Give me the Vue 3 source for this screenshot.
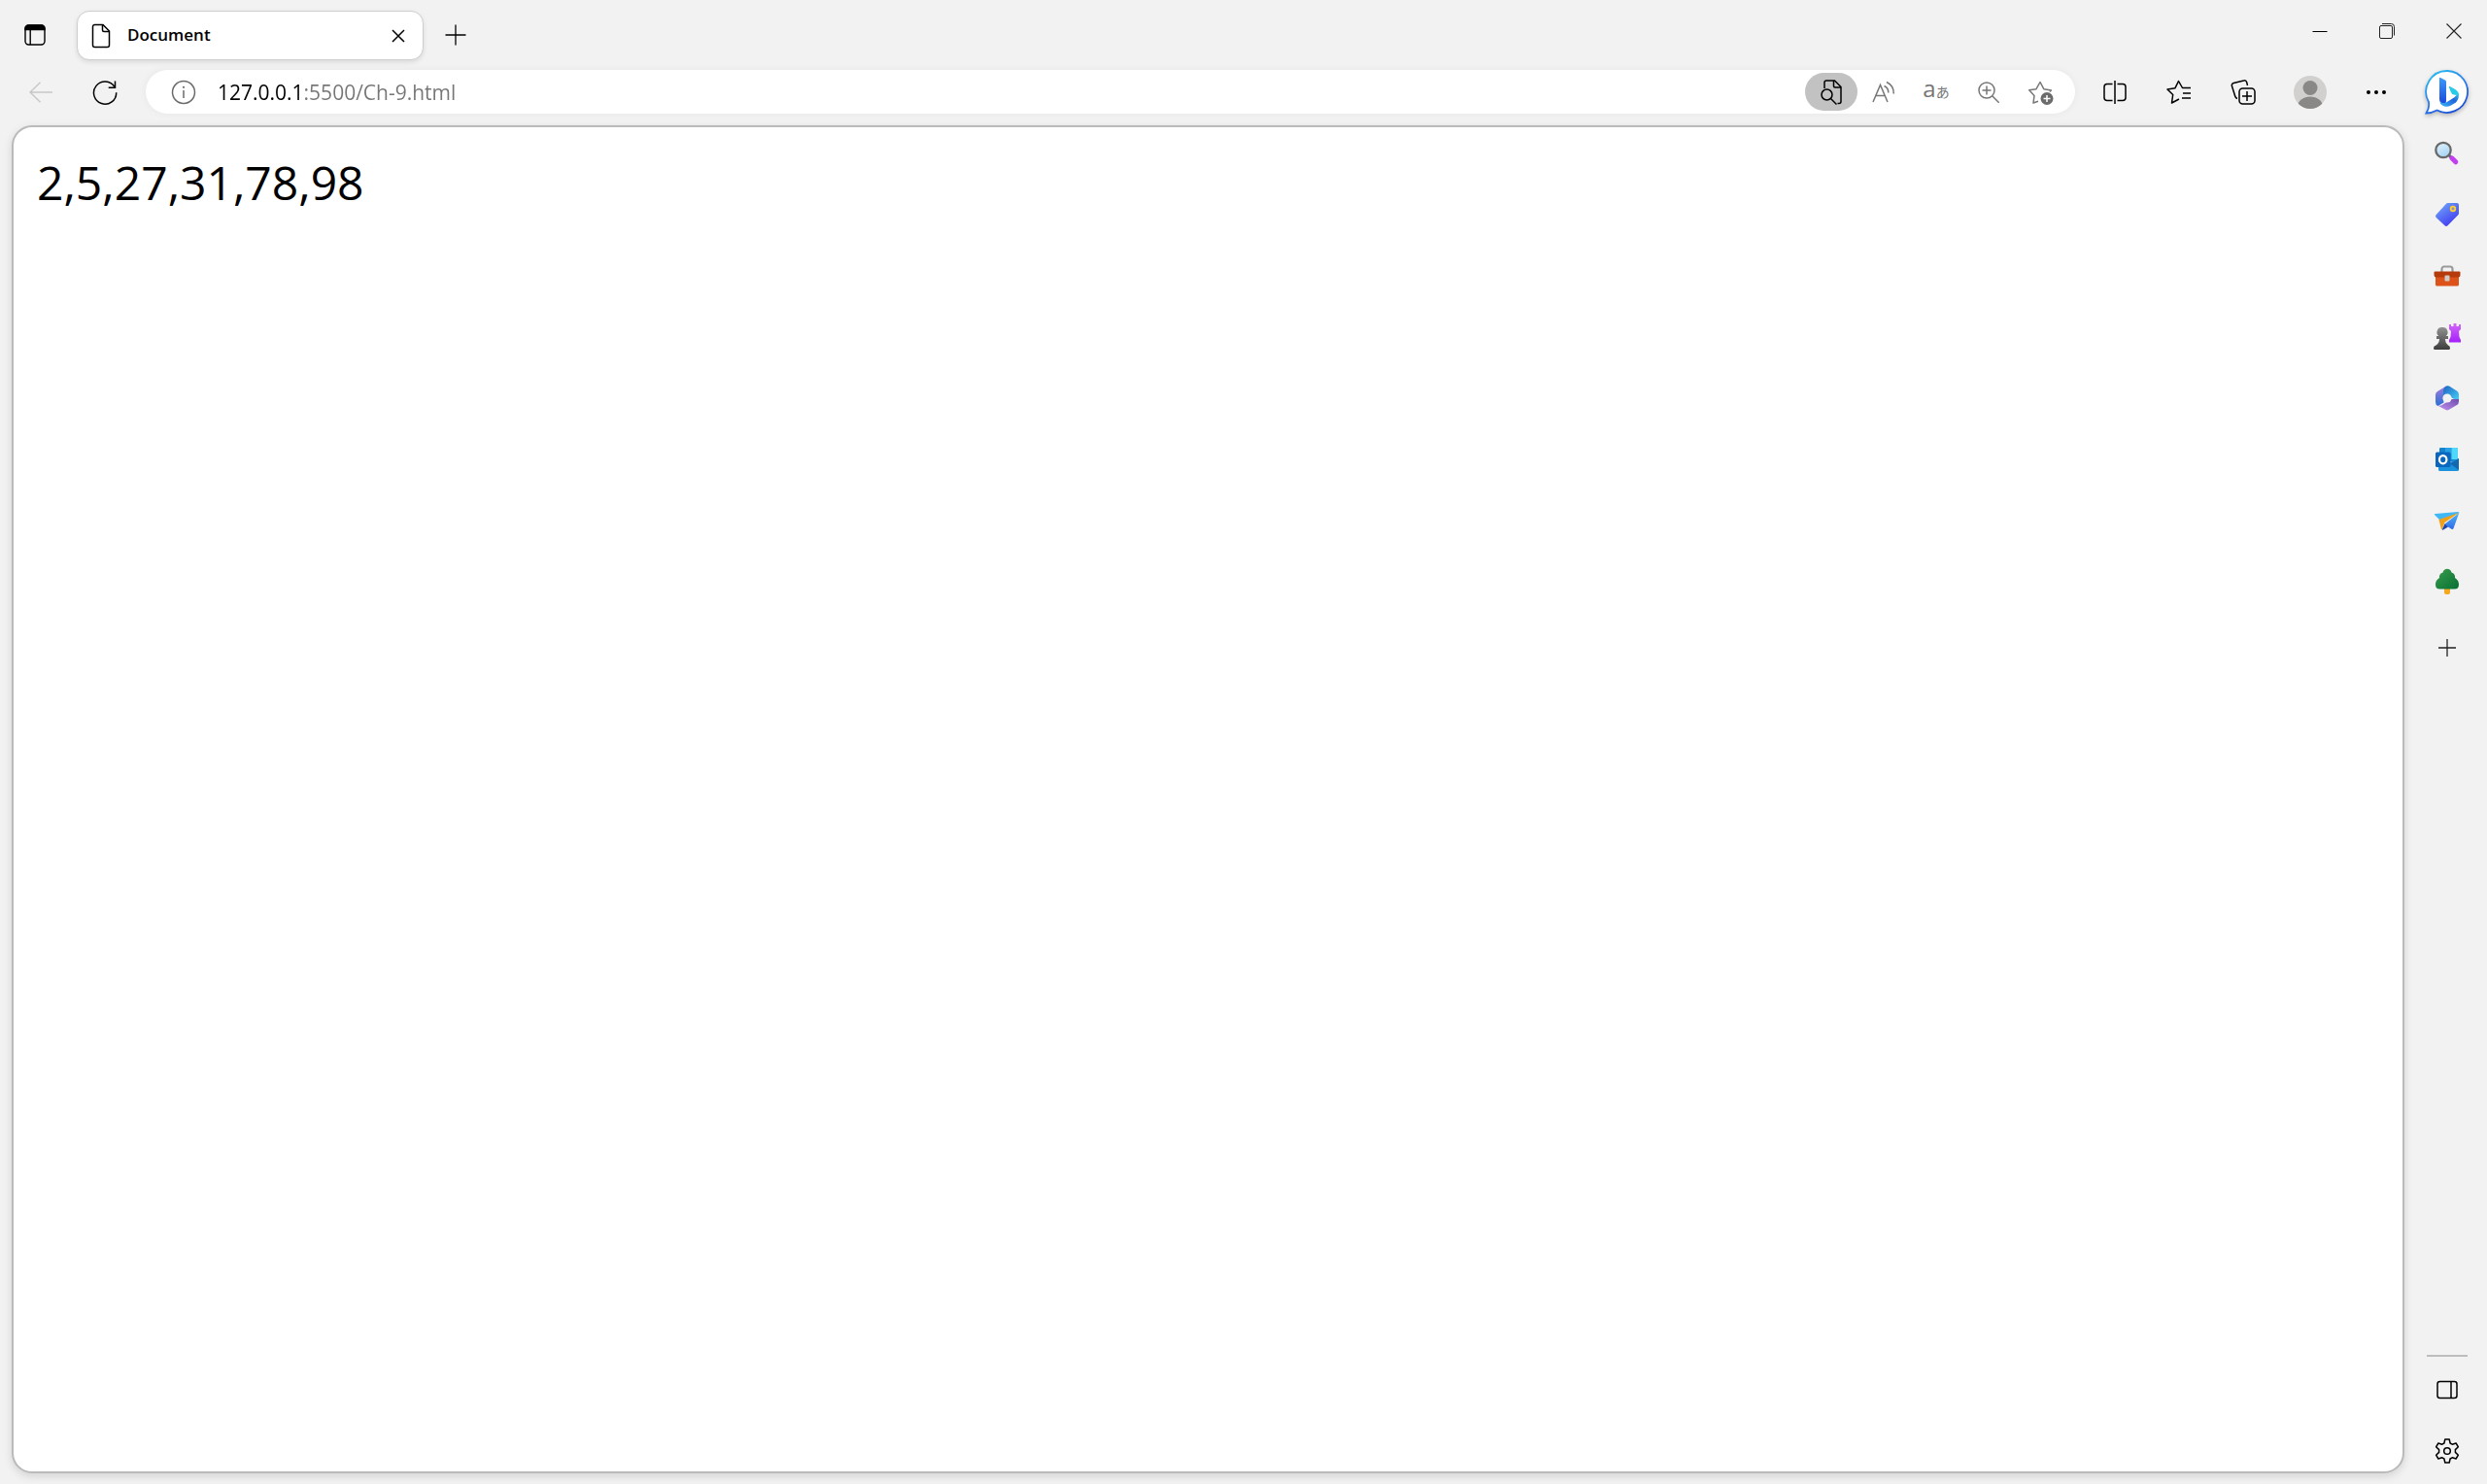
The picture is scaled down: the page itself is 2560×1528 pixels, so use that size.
<script setup>
import { ref } from 'vue'

const address = ref('127.0.0.1:5500/Ch-9.html')
const numbers = [2, 5, 27, 31, 78, 98]
</script>

<template>
  <div class="browser">
    <header class="titlebar">
      <button class="cell" aria-label="Tab actions menu">
        <svg width="24" height="24" viewBox="0 0 24 24" fill="none" stroke="#000" stroke-width="1.4">
          <rect x="2" y="2" width="20" height="20" rx="3.5" />
          <path d="M2 6.5V5.5A3.5 3.5 0 0 1 5.500 2h13A3.500 3.500 0 0 1 22 5.500v1z" fill="#000" />
          <path d="M7.200 6v16" />
        </svg>
      </button>
      <div class="tab">
        <svg class="tab-icon" width="20" height="26" viewBox="0 0 20 26" fill="none" stroke="#000" stroke-width="1.5">
          <path d="M3.500 1.500h8.500l6.500 6.500v14.500a2 2 0 0 1-2 2h-13a2 2 0 0 1-2-2v-19a2 2 0 0 1 2-2z" />
          <path d="M11.500 1.500v5.500a1.500 1.500 0 0 0 1.500 1.500h5.500" />
        </svg>
        <span class="tab-title">Document</span>
        <button class="tab-close" aria-label="Close tab">
          <svg width="14" height="14" viewBox="0 0 14 14" fill="none" stroke="#000" stroke-width="1.500">
            <path d="M1 1l12 12M13 1L1 13" />
          </svg>
        </button>
      </div>
      <button class="cell" aria-label="New tab">
        <svg width="22" height="22" viewBox="0 0 22 22" fill="none" stroke="#000" stroke-width="1.300">
          <path d="M11 .500v21M.500 11h21" />
        </svg>
      </button>
      <div class="window-controls">
        <button aria-label="Minimize">
          <svg width="16" height="16" viewBox="0 0 16 16" stroke="#000"><path d="M.500 8.500h15" /></svg>
        </button>
        <button aria-label="Restore">
          <svg width="18" height="18" viewBox="0 0 18 18" fill="none" stroke="#222">
            <rect x="1.500" y="3.500" width="13" height="13" rx="1.500" />
            <path d="M4 1.500h9.500a3 3 0 0 1 3 3v9" />
          </svg>
        </button>
        <button aria-label="Close">
          <svg width="16" height="16" viewBox="0 0 16 16" stroke="#222" stroke-width="1.100"><path d="M.500 .500l15 15M15.500 .500l-15 15" /></svg>
        </button>
      </div>
    </header>

    <div class="body">
      <main class="main">
        <nav class="toolbar">
          <button class="cell" aria-label="Back" disabled>
            <svg width="24" height="22" viewBox="0 0 24 22" fill="none" stroke="#c8c8c8" stroke-width="1.500">
              <path d="M24 11H1M11.500 .700L1 11l10.500 10.300" />
            </svg>
          </button>
          <button class="cell" aria-label="Refresh">
            <svg width="26" height="26" viewBox="0 0 26 26" fill="none" stroke="#000" stroke-width="1.500">
              <path d="M24.700 13.200A11.600 11.600 0 1 1 23 7.500" />
              <path d="M23.500 1.500v6.800h-6.800" />
            </svg>
          </button>

          <div class="address">
            <button class="address-btn" aria-label="Site information">
              <svg width="26" height="26" viewBox="0 0 26 26" fill="none" stroke="#6b6b6b" stroke-width="1.500">
                <circle cx="13" cy="13" r="11.500" />
                <path d="M13 11v8" />
                <circle cx="13" cy="7.800" r="1.100" fill="#6b6b6b" stroke="none" />
              </svg>
            </button>
            <input v-model="address" class="url" type="text" aria-label="Address and search bar" spellcheck="false" />
            <button class="address-btn active" aria-label="Find on page">
              <svg width="22" height="26" viewBox="0 0 22 26" fill="none" stroke="#000" stroke-width="1.500">
                <path d="M4 9V3a2 2 0 0 1 2-2h8.500L21 7.500V22.500a2 2 0 0 1-2 2h-1.500" />
                <path d="M13.500 1v5.500a1.500 1.500 0 0 0 1.500 1.500h6" />
                <circle cx="6.500" cy="15.500" r="5.500" />
                <path d="M10.500 19.500l6 6" />
              </svg>
            </button>
            <button class="address-btn" aria-label="Read aloud">
              <svg width="24" height="24" viewBox="0 0 24 24" fill="none" stroke="#767676" stroke-width="1.500">
                <path d="M1 22L8.500 4.500 16 22M3.800 15.500h9.400" />
                <path d="M12.500 5.500a7.500 7.500 0 0 1 4.300 7M15 1.500a13 13 0 0 1 7.300 12" />
              </svg>
            </button>
            <button class="address-btn translate" aria-label="Show translate options"><span>a</span><span class="kana">あ</span></button>
            <button class="address-btn" aria-label="Zoom">
              <svg width="24" height="24" viewBox="0 0 24 24" fill="none" stroke="#767676" stroke-width="1.500">
                <circle cx="10" cy="10" r="8" />
                <path d="M15.700 15.700l7 7M10 5.500v9M5.500 10h9" />
              </svg>
            </button>
            <button class="address-btn" aria-label="Add this page to favorites">
              <svg width="28" height="28" viewBox="0 0 28 28" fill="none" stroke="#767676" stroke-width="1.500" stroke-linejoin="round">
                <path d="M11 23.300l-5 1.700 1-7.500-5.300-5.700 7.300-1.100 4-7.200 3.800 7.200 7.600 1.300-1.500 1.500" />
                <circle cx="20" cy="20.500" r="6.500" fill="#6b6b6b" stroke="none" />
                <path d="M20 17v7M16.500 20.500h7" stroke="#fff" />
              </svg>
            </button>
          </div>

          <button class="cell" aria-label="Split screen">
            <svg width="24" height="24" viewBox="0 0 24 24" fill="none" stroke="#000" stroke-width="1.500">
              <path d="M9.500 3.500H4a3 3 0 0 0-3 3v11a3 3 0 0 0 3 3h5.500M14.500 3.500H20a3 3 0 0 1 3 3v11a3 3 0 0 1-3 3h-5.500" />
              <path d="M12 0v24" />
            </svg>
          </button>
          <button class="cell" aria-label="Favorites">
            <svg width="26" height="26" viewBox="0 0 26 26" fill="none" stroke="#000" stroke-width="1.500" stroke-linejoin="round">
              <path d="M25 8.500h-8.500L12.500 1.500 9 8.700 1 10l5.700 5.500L5.500 24l7.500-4" />
              <path d="M17 14h8M16 19h9" />
            </svg>
          </button>
          <button class="cell" aria-label="Collections">
            <svg width="26" height="26" viewBox="0 0 26 26" fill="none" stroke="#000" stroke-width="1.500">
              <rect x="9" y="9" width="16" height="16" rx="3.500" />
              <path d="M17 12v10M12 17h10M7 19.500a3 3 0 0 1-2.200-2.200L1.400 6.600A2.500 2.500 0 0 1 3.200 3.500L13.500 1a2.600 2.600 0 0 1 3.200 1.800L17.500 6" />
            </svg>
          </button>
          <button class="cell profile" aria-label="Profile">
            <svg width="34" height="34" viewBox="0 0 34 34">
              <defs><clipPath id="avatar"><circle cx="17" cy="17" r="17" /></clipPath></defs>
              <circle cx="17" cy="17" r="17" fill="#d2d0ce" />
              <g fill="#8a8886" clip-path="url(#avatar)">
                <circle cx="17" cy="12.500" r="7.500" />
                <ellipse cx="17" cy="32" rx="13" ry="10.500" />
              </g>
            </svg>
          </button>
          <button class="cell more" aria-label="Settings and more">
            <svg width="22" height="6" viewBox="0 0 22 6"><circle cx="3" cy="3" r="2" /><circle cx="11" cy="3" r="2" /><circle cx="19" cy="3" r="2" /></svg>
          </button>
        </nav>

        <section class="page">{{ numbers.join(',') }}</section>
      </main>

      <aside class="sidebar">
        <button class="bing" aria-label="Bing">
          <svg width="48" height="48" viewBox="0 0 48 48">
            <defs>
              <linearGradient id="bubble" x1="0" y1="0" x2=".6" y2="1"><stop offset="0" stop-color="#22c8ee" /><stop offset=".5" stop-color="#2d86ee" /><stop offset="1" stop-color="#1a50d8" /></linearGradient>
              <linearGradient id="stem" x1="0" y1="0" x2="0" y2="1"><stop offset="0" stop-color="#3a9cf8" /><stop offset="1" stop-color="#1c48dc" /></linearGradient>
              <linearGradient id="bowl" x1="0" y1="1" x2="1" y2="0"><stop offset="0" stop-color="#36b8f8" /><stop offset=".6" stop-color="#2164dc" /><stop offset="1" stop-color="#2ad0e8" /></linearGradient>
            </defs>
            <path d="M24.500 2A21.500 21.500 0 1 1 13.500 42.500Q8 45.500 2.500 45.500Q6 40 5 34A21.500 21.500 0 0 1 24.500 2z" fill="#fff" stroke="url(#bubble)" stroke-width="1.800" />
            <path d="M16 9.500Q16 8.500 17 9L22 11.500Q23 12 23 13V33Q23 36 19.500 35.500Q16 34.500 16 31z" fill="url(#stem)" />
            <path d="M16.500 33Q19 36.500 23 34.500L31 29.500Q34.500 27 35.500 24Q37 30 33 34.500L28 37.500Q23 40 19 37.500Q16.500 36 16.500 33z" fill="url(#bowl)" />
            <path d="M26 19Q25.500 17.500 27 18L33 21.500Q36 23.500 35.500 27.500Q34 27 31 26.500Q28.500 26 27.700 23.500z" fill="#25cbe8" />
          </svg>
        </button>

        <button class="tool" aria-label="Search">
          <svg width="28" height="28" viewBox="0 0 28 28">
            <defs><linearGradient id="lens" x1="0" y1="0" x2=".5" y2="1"><stop offset="0" stop-color="#e4f3fc" /><stop offset="1" stop-color="#a6d4f4" /></linearGradient></defs>
            <path d="M15.500 15.500l4 4" stroke="#666" stroke-width="3" />
            <path d="M18.800 18.800l4 4" stroke="#c040f0" stroke-width="5" stroke-linecap="round" />
            <circle cx="10" cy="10.500" r="7.700" fill="url(#lens)" stroke="#686868" stroke-width="2.300" />
          </svg>
        </button>
        <button class="tool" aria-label="Shopping">
          <svg width="28" height="28" viewBox="0 0 28 28">
            <defs><linearGradient id="tag" x1="0" y1="0" x2=".7" y2="1"><stop offset="0" stop-color="#74b0fa" /><stop offset="1" stop-color="#4038f0" /></linearGradient></defs>
            <path d="M14.500 2H24a2 2 0 0 1 2 2v8.500q0 1-.700 1.700L14.500 25.200q-1.500 1.500-3 0L2.700 17q-1.500-1.500 0-3L13 2.800q.700-.800 1.500-.800z" fill="url(#tag)" />
            <circle cx="20" cy="8" r="2.300" fill="#8a90d0" stroke="#ffd028" stroke-width="1.800" />
          </svg>
        </button>
        <button class="tool" aria-label="Tools">
          <svg width="28" height="28" viewBox="0 0 28 28">
            <path d="M8.500 10V7a2.500 2.500 0 0 1 2.500-2.500h6a2.500 2.500 0 0 1 2.500 2.500v3" fill="none" stroke="#999" stroke-width="2.200" />
            <path d="M2 14h24v9a1.500 1.500 0 0 1-1.500 1.500h-21A1.500 1.500 0 0 1 2 23z" fill="#dc5219" />
            <path d="M1.500 9.500h25q1 0 1 1v2.500q0 2.500-2.500 2.500H3q-2.500 0-2.500-2.500V10.500q0-1 1-1z" fill="#b53a0c" />
            <rect x="11.500" y="13.500" width="5" height="6" rx="1" fill="#cfcac7" />
          </svg>
        </button>
        <button class="tool" aria-label="Games">
          <svg width="30" height="30" viewBox="0 0 30 30">
            <defs>
              <linearGradient id="rook" x1="0" y1="0" x2="0" y2="1"><stop offset="0" stop-color="#d268f8" /><stop offset="1" stop-color="#a51ffa" /></linearGradient>
              <linearGradient id="pawn" x1="0" y1="0" x2="0" y2="1"><stop offset="0" stop-color="#929292" /><stop offset="1" stop-color="#3c3c3c" /></linearGradient>
            </defs>
            <path d="M17 2h2v2h2.500V1h3v3H27V2h2v5l-2 2 .500 6 1.500 3v2.500H17V18l1.500-3 .500-6-2-2z" fill="url(#rook)" />
            <path d="M10 5a5 5 0 0 1 3.500 9H16v3h-3.200q.200 4 3.200 6.500 2 .500 2 3 0 1.500-1.500 1.500h-14Q1 28 1 26.500q0-2.500 2.500-3 3.500-2.500 3.500-6.500H4v-3h2.500A5 5 0 0 1 10 5z" fill="url(#pawn)" />
          </svg>
        </button>
        <button class="tool" aria-label="Microsoft 365">
          <svg width="28" height="28" viewBox="0 0 28 28">
            <defs>
              <linearGradient id="m1" x1="0" y1="0" x2="0" y2="1"><stop offset="0" stop-color="#a67cdc" /><stop offset="1" stop-color="#2870d8" /></linearGradient>
              <linearGradient id="m2" x1="0" y1="0" x2="1" y2="1"><stop offset="0" stop-color="#1c64c0" /><stop offset="1" stop-color="#49d4fc" /></linearGradient>
              <linearGradient id="m3" x1="0" y1="1" x2="1" y2="0"><stop offset="0" stop-color="#c493ee" /><stop offset="1" stop-color="#6d4cb0" /></linearGradient>
            </defs>
            <path d="M13 1.500L4 7q-2 1.200-2 3.500v7.500q0 3 2.500 4l6-3.500V8q0-4 2.500-6.500z" fill="url(#m1)" />
            <path d="M13 1.500q1.500-.700 3 0L24 6.500q2 1.200 2 3.500v7.500l-7.500-4-4.500-3.500-4 1.500V7q0-4 3-5.500z" fill="url(#m2)" />
            <path d="M26 17q0 3-2 4l-8.500 5q-1.500.800-3 0L4 21.500q3 .700 5.500-1l9-5.500 7.500 0z" fill="url(#m3)" />
            <circle cx="14" cy="14" r="4.600" fill="#f2f2f2" />
          </svg>
        </button>
        <button class="tool" aria-label="Outlook">
          <svg width="28" height="28" viewBox="0 0 28 28">
            <path d="M7 2h17a1 1 0 0 1 1 1v13H6V3a1 1 0 0 1 1-1z" fill="#1584cf" />
            <path d="M12 2h6.500v6H12z" fill="#28a0e4" /><path d="M18.500 2H24a1 1 0 0 1 1 1v11h-6.500z" fill="#4fd8fa" />
            <path d="M5 15l9 3 12-5v11.500a1.500 1.500 0 0 1-1.500 1.500h-18A1.500 1.500 0 0 1 5 24.500z" fill="#1b93dc" />
            <path d="M26 13v12L17 18.500z" fill="#1269b0" />
            <rect x="2" y="6.500" width="15.500" height="15.500" rx="1.500" fill="#0b66bd" />
            <ellipse cx="9.700" cy="14.200" rx="3.700" ry="4.100" fill="none" stroke="#fff" stroke-width="2.200" />
          </svg>
        </button>
        <button class="tool" aria-label="Drop">
          <svg width="28" height="28" viewBox="0 0 28 28">
            <defs><linearGradient id="wing" x1="0" y1="0" x2="0" y2="1"><stop offset="0" stop-color="#46b8f6" /><stop offset="1" stop-color="#3468ea" /></linearGradient></defs>
            <path d="M.500 7.500Q1 7 2 7L25 5q2 0 1 1.500L6.500 13.500z" fill="#42b7f5" />
            <path d="M26.300 6L20.500 22q-.500 1.500-2 .700L11 18z" fill="url(#wing)" />
            <path d="M5.500 13L26 6 11.500 16 9 23q-1 .500-1.200-.500z" fill="#f0a019" />
            <path d="M11.500 17.500l3.500 3-5 3q-1.500.500-1-.500z" fill="#1744b8" />
          </svg>
        </button>
        <button class="tool" aria-label="Browser essentials">
          <svg width="28" height="28" viewBox="0 0 28 28">
            <defs><linearGradient id="leaf" x1="0" y1="0" x2="1" y2="1"><stop offset="0" stop-color="#3a9c4c" /><stop offset="1" stop-color="#067034" /></linearGradient></defs>
            <path d="M11 19h6v6q0 2-3 2t-3-2z" fill="#f5a81c" />
            <path d="M14 .800q3.500 0 4.500 3.700 4 1.200 3.500 5.500 4.200 2.500 4 7 0 4.500-4.500 4.500h-15Q2 21.500 2 17q-.200-4.500 4-7-.500-4.300 3.500-5.500Q10.500.800 14 .800z" fill="url(#leaf)" />
          </svg>
        </button>
        <button class="tool add" aria-label="Customize">
          <svg width="18" height="18" viewBox="0 0 18 18" stroke="#222" stroke-width="1.300"><path d="M9 0v18M0 9h18" /></svg>
        </button>

        <div class="sidebar-end">
          <hr />
          <button class="tool" aria-label="Hide sidebar">
            <svg width="22" height="20" viewBox="0 0 22 20" fill="none" stroke="#000" stroke-width="1.500">
              <rect x="1" y="1.500" width="20" height="17" rx="2.500" /><path d="M15 1.500v17" />
            </svg>
          </button>
          <button class="tool" aria-label="Sidebar settings">
            <svg width="26" height="26" viewBox="0 0 26 26" fill="none" stroke="#000" stroke-width="1.500" stroke-linejoin="round">
              <path d="M10.800 1h4.400l.900 4 2.100 1.200 3.900-1.200 2.300 3.800-3 2.800v2.800l3 2.800-2.300 3.800-3.900-1.200-2.100 1.200-.900 4h-4.400l-.900-4-2.100-1.200L3.900 21l-2.300-3.800 3-2.800v-2.800l-3-2.800L3.900 5l3.900 1.200L9.900 5z" />
              <circle cx="13" cy="13" r="3.300" />
            </svg>
          </button>
        </div>
      </aside>
    </div>
  </div>
</template>

<style>
body {
  margin: 0;
  background: #f2f2f2;
}
</style>

<style scoped>
.browser {
  box-sizing: border-box;
  display: flex;
  flex-direction: column;
  min-height: 100vh;
  background: #f2f2f2;
  color: #000;
  font-family: "Open Sans", "Noto Sans", sans-serif;
}
button {
  display: flex;
  flex: none;
  align-items: center;
  justify-content: center;
  padding: 0;
  border: 0;
  background: none;
  color: inherit;
  font: inherit;
}
svg {
  display: block;
  flex: none;
}
.cell {
  width: 66px;
  height: 48px;
}
.titlebar {
  display: flex;
  height: 66px;
  padding-left: 3px;
}
.titlebar > .cell {
  height: 72px;
}
.tab {
  box-sizing: border-box;
  display: flex;
  align-items: center;
  width: 357px;
  height: 51px;
  margin: 11px 0 0 10px;
  padding: 0 17px 0 14px;
  border: 1px solid #cecece;
  border-radius: 13px;
  background: #fff;
  box-shadow: 0 2px 5px rgba(0, 0, 0, 0.1);
}
.tab-icon {
  margin-right: 17px;
}
.tab-title {
  flex: 1;
  padding-bottom: 2px;
  font-size: 17px;
  font-weight: 600;
  line-height: 24px;
}
.tab-close {
  width: 16px;
  height: 24px;
}
.window-controls {
  display: flex;
  height: 64px;
  margin-left: auto;
}
.window-controls button {
  width: 69px;
}
.body {
  display: flex;
  flex: 1;
}
.main {
  display: flex;
  flex: 1;
  flex-direction: column;
  min-width: 0;
}
.toolbar {
  display: flex;
  align-items: center;
  height: 57px;
  padding-left: 9px;
}
.profile {
  width: 72px;
}
.more {
  width: 64px;
}
.address {
  box-sizing: border-box;
  display: flex;
  flex: 1;
  align-items: center;
  min-width: 0;
  height: 45px;
  margin: 0 8px 0 9px;
  padding: 0 8px 0 12px;
  border-radius: 23px;
  background: #fff;
  box-shadow: 0 0 8px rgba(0, 0, 0, 0.05);
}
.address-btn {
  width: 54px;
  height: 39px;
  border-radius: 20px;
}
.active {
  background: #c2c2c2;
}
.translate {
  align-items: baseline;
  color: #767676;
  font-family: "Open Sans", "Noto Sans CJK JP", sans-serif;
  font-size: 24px;
  line-height: 32px;
}
.kana {
  font-size: 14px;
}
.url {
  flex: 1;
  min-width: 0;
  height: 39px;
  padding: 0 0 0 8px;
  border: 0;
  outline: 0;
  background: linear-gradient(90deg, #000 97px, #767676 97px);
  background-clip: text;
  color: transparent;
  font: 400 21px/28px "Open Sans", "Noto Sans", sans-serif;
}
.page {
  flex: 1;
  margin: 6px 3px 11px 12px;
  padding: 22px 24px;
  border: 2px solid #bababa;
  border-radius: 21px;
  background: #fff;
  box-shadow: 0 3px 10px rgba(0, 0, 0, 0.13);
  font-size: 48px;
  line-height: 70px;
}
.sidebar {
  display: flex;
  flex: none;
  flex-direction: column;
  align-items: center;
  width: 82px;
}
.bing {
  width: 82px;
  height: 60px;
  padding-bottom: 3px;
  filter: drop-shadow(0 2px 2px rgba(0, 0, 0, 0.25));
}
.tool {
  width: 82px;
  height: 63px;
}
.add {
  height: 74px;
}
.sidebar-end {
  display: flex;
  flex-direction: column;
  align-items: center;
  margin-top: auto;
  padding-bottom: 3px;
}
hr {
  width: 42px;
  height: 2px;
  margin: 0 0 2px;
  border: 0;
  background: #bdbdbd;
}
</style>
